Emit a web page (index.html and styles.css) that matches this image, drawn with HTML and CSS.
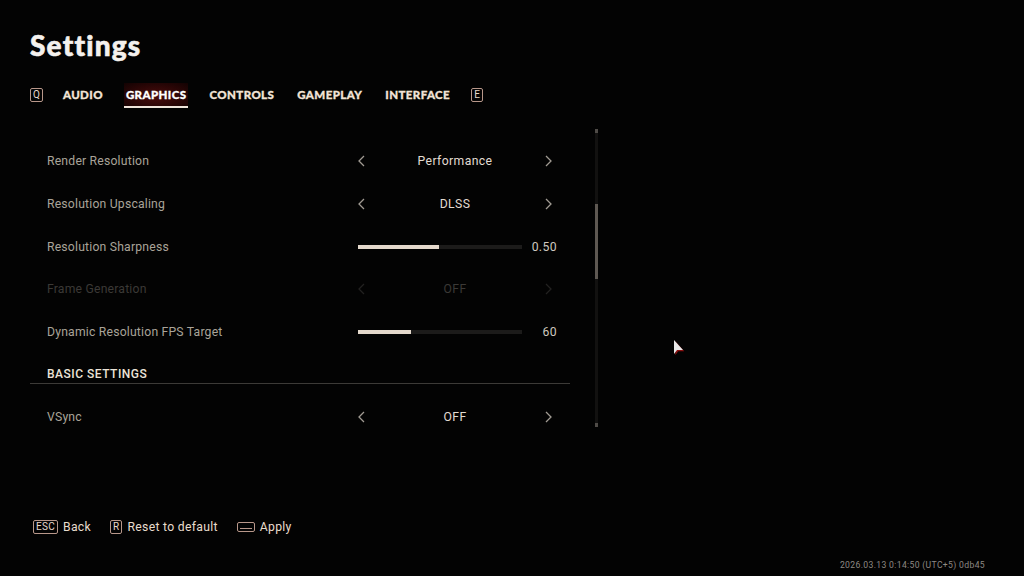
FILE: index.html
```html
<!DOCTYPE html>
<html>
<head>
<meta charset="utf-8">
<link rel="stylesheet" href="styles.css">
</head>
<body>
<div class="screen">
  <h1 class="title">Settings</h1>
  <nav class="tabs">
    <span class="key">Q</span>
    <span class="tab">AUDIO</span>
    <span class="tab active">GRAPHICS</span>
    <span class="tab">CONTROLS</span>
    <span class="tab">GAMEPLAY</span>
    <span class="tab">INTERFACE</span>
    <span class="key">E</span>
  </nav>
  <main class="content">
    <section class="panel">
      <div class="row">
        <span class="label">Render Resolution</span>
        <div class="chooser">
          <svg class="chev" viewBox="0 0 7 12"><path d="M6 1 L1 6 L6 11"/></svg>
          <span class="value">Performance</span>
          <svg class="chev" viewBox="0 0 7 12"><path d="M1 1 L6 6 L1 11"/></svg>
        </div>
      </div>
      <div class="row">
        <span class="label">Resolution Upscaling</span>
        <div class="chooser">
          <svg class="chev" viewBox="0 0 7 12"><path d="M6 1 L1 6 L6 11"/></svg>
          <span class="value">DLSS</span>
          <svg class="chev" viewBox="0 0 7 12"><path d="M1 1 L6 6 L1 11"/></svg>
        </div>
      </div>
      <div class="row">
        <span class="label">Resolution Sharpness</span>
        <div class="slider">
          <div class="track"><div class="fill" style="width:49.5%"></div></div>
          <span class="num">0.50</span>
        </div>
      </div>
      <div class="row disabled">
        <span class="label">Frame Generation</span>
        <div class="chooser">
          <svg class="chev" viewBox="0 0 7 12"><path d="M6 1 L1 6 L6 11"/></svg>
          <span class="value">OFF</span>
          <svg class="chev" viewBox="0 0 7 12"><path d="M1 1 L6 6 L1 11"/></svg>
        </div>
      </div>
      <div class="row">
        <span class="label">Dynamic Resolution FPS Target</span>
        <div class="slider">
          <div class="track"><div class="fill" style="width:32.5%"></div></div>
          <span class="num">60</span>
        </div>
      </div>
      <div class="group">BASIC SETTINGS</div>
      <div class="row">
        <span class="label">VSync</span>
        <div class="chooser">
          <svg class="chev" viewBox="0 0 7 12"><path d="M6 1 L1 6 L6 11"/></svg>
          <span class="value">OFF</span>
          <svg class="chev" viewBox="0 0 7 12"><path d="M1 1 L6 6 L1 11"/></svg>
        </div>
      </div>
    </section>
    <div class="scrollbar"><div class="thumb"></div></div>
  </main>
  <footer class="footer">
    <span class="hint"><span class="key">ESC</span>Back</span>
    <span class="hint"><span class="key">R</span>Reset to default</span>
    <span class="hint"><span class="space"></span>Apply</span>
  </footer>
  <div class="build">2026.03.13 0:14:50 (UTC+5) 0db45</div>
  <svg class="cursor" viewBox="0 0 12 18" width="12" height="18">
    <path d="M1.5 1 L1.5 15 L4.5 11 L10.5 11 Z" fill="#8a1010" transform="translate(0.8 1.2)"/>
    <path d="M1 1 L1 15 L4 11 L10 11 Z" fill="#e8e8e8"/>
  </svg>
</div>
</body>
</html>
```

FILE: styles.css
```css
* { box-sizing: border-box; margin: 0; padding: 0; }
html, body { width: 1024px; height: 576px; background: #030303; overflow: hidden; }
body { font-family: Roboto, "Liberation Sans", sans-serif; color: #ddd5cb; }

.screen {
  position: relative;
  width: 1024px;
  height: 576px;
  display: flex;
  flex-direction: column;
}

.title {
  font-family: Lato, "Liberation Sans", sans-serif;
  font-weight: 900;
  font-size: 28px;
  line-height: 32px;
  color: #f4f1ee;
  margin: 29px 0 0 30px;
  letter-spacing: 1.2px;
  -webkit-text-stroke: 0.6px #f4f1ee;
}

.tabs {
  display: flex;
  align-items: center;
  height: 24px;
  margin: 22px 0 0 30px;
}
.key {
  display: inline-flex;
  align-items: center;
  justify-content: center;
  height: 14px;
  min-width: 12px;
  padding: 0 2px;
  border: 1px solid #b8978a;
  border-radius: 2px;
  font-family: Roboto, "Liberation Sans", sans-serif;
  font-size: 10px;
  line-height: 12px;
  color: #e6d8cc;
}
.tabs .key { margin-right: 18px; }
.tabs .tab + .key { margin-left: 0; }
.tab {
  font-family: Lato, "Liberation Sans", sans-serif;
  font-weight: 900;
  font-size: 11.5px;
  letter-spacing: 0.4px;
  color: #f2e4d6;
  height: 24px;
  line-height: 24px;
  padding: 0 2px;
  margin-right: 19px;
  position: relative;
  -webkit-text-stroke: 0.3px #f2e4d6;
}
.tab.active {
  color: #ffffff;
  -webkit-text-stroke: 0.3px #ffffff;
  background: radial-gradient(ellipse at 50% 55%, #4a0c0c 0%, #2c0606 55%, #120202 100%);
}
.tab.active::after {
  content: "";
  position: absolute;
  left: 0;
  right: 0;
  bottom: -1px;
  height: 2px;
  background: #efe4da;
}

.content {
  display: flex;
  margin: 33px 0 0 30px;
  height: 300px;
}
.panel {
  width: 540px;
  display: flex;
  flex-direction: column;
}
.row {
  height: 42.67px;
  display: flex;
  align-items: center;
  padding-left: 17px;
}
.label {
  width: 311px;
  font-size: 12.2px;
  letter-spacing: 0.2px;
  color: #a9a399;
}
.chooser {
  width: 199px;
  display: flex;
  align-items: center;
  justify-content: space-between;
  padding-right: 5px;
}
.chev {
  width: 7px;
  height: 12px;
  fill: none;
  stroke: #a19b93;
  stroke-width: 1.3;
}
.value {
  font-size: 12.2px;
  letter-spacing: 0.4px;
  color: #e2dbd2;
}
.slider {
  width: 199px;
  display: flex;
  align-items: center;
  justify-content: space-between;
}
.track {
  width: 164px;
  height: 4px;
  background: #1c1b1a;
}
.fill {
  height: 100%;
  background: #e4d9cc;
}
.num {
  font-size: 12.2px;
  letter-spacing: 0.4px;
  color: #cfc8bf;
}
.disabled .label, .disabled .value { color: #3b3936; }
.disabled .chev { stroke: #222120; }

.group {
  height: 31px;
  display: flex;
  align-items: flex-end;
  padding: 0 0 2px 17px;
  border-bottom: 1px solid #3c3a37;
  margin-bottom: 11.67px;
  font-size: 12px;
  font-weight: 500;
  letter-spacing: 0.5px;
  color: #ece3d8;
}

.scrollbar {
  position: relative;
  margin: -11px 0 0 25px;
  width: 3px;
  height: 298px;
  background: #121110;
  border-top: 4px solid #4f4b47;
  border-bottom: 4px solid #4f4b47;
}
.thumb {
  position: absolute;
  left: 0;
  right: 0;
  top: 71px;
  height: 75px;
  background: #5e5852;
}

.footer {
  display: flex;
  align-items: center;
  gap: 19px;
  margin: 79px 0 0 33px;
  height: 16px;
}
.hint {
  display: inline-flex;
  align-items: center;
  gap: 5px;
  font-size: 12.2px;
  letter-spacing: 0.3px;
  color: #e8dccd;
}
.footer .key { height: 14px; font-size: 10px; }
.space {
  display: inline-block;
  width: 18px;
  height: 10px;
  border: 1px solid #b8978a;
  border-radius: 2px;
  position: relative;
}
.space::after {
  content: "";
  position: absolute;
  left: 2px;
  right: 2px;
  bottom: 2px;
  height: 1px;
  background: #b8978a;
}

.build {
  position: absolute;
  right: 39px;
  bottom: 6px;
  font-size: 8.6px;
  letter-spacing: 0.35px;
  color: #8e8983;
}
.cursor {
  position: absolute;
  left: 673px;
  top: 339px;
}
```
